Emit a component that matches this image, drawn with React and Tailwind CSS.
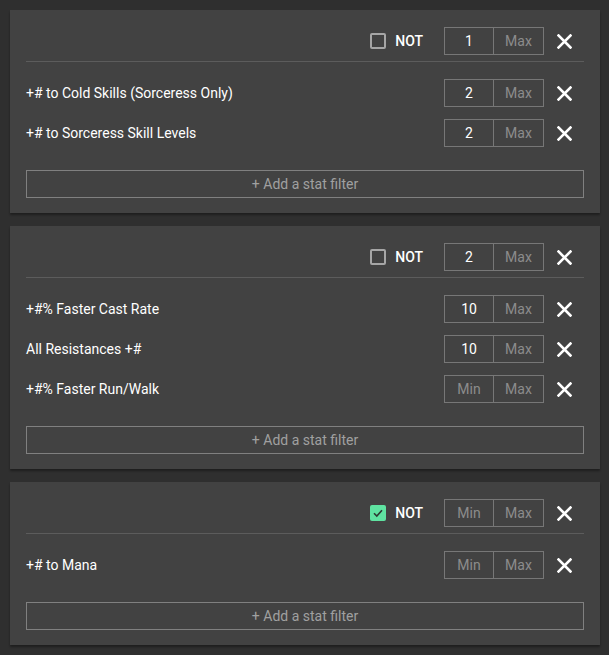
import React from "react";

const XIcon = () => (
  <svg width="15" height="15" viewBox="0 0 15 15" className="block">
    <path d="M1.5 1.5 L13.5 13.5 M13.5 1.5 L1.5 13.5" stroke="#ffffff" strokeWidth="2.6" strokeLinecap="square" fill="none" />
  </svg>
);

const RangeInputs = ({ min, max }) => (
  <div className="flex items-center">
    <div className="flex h-[28px] w-[100px] border border-[#777777]">
      <div className={"flex w-1/2 items-center justify-center border-r border-[#777777] " + (min ? "text-white" : "text-[#8c8c8c]")}>
        {min || "Min"}
      </div>
      <div className={"flex w-1/2 items-center justify-center " + (max ? "text-white" : "text-[#8c8c8c]")}>
        {max || "Max"}
      </div>
    </div>
    <div className="flex w-[40px] items-center justify-center">
      <XIcon />
    </div>
  </div>
);

const Checkbox = ({ checked }) =>
  checked ? (
    <div className="flex h-[16px] w-[16px] items-center justify-center rounded-[2px] bg-[#5fe3a1]">
      <svg width="12" height="12" viewBox="0 0 12 12">
        <path d="M2 6.2 L4.8 9 L10 3.2" stroke="#2d3a33" strokeWidth="1.6" fill="none" />
      </svg>
    </div>
  ) : (
    <div className="h-[16px] w-[16px] rounded-[2px] border-2 border-[#a6a6a6]" />
  );

const Panel = ({ checked, count, rows }) => (
  <div className="bg-[#424242] px-4 pt-[17px] pb-[15px] shadow-[0_2px_2px_rgba(0,0,0,0.35)]">
    <div className="flex h-[28px] items-center justify-end">
      <Checkbox checked={checked} />
      <span className="ml-[9px] mr-[21px] font-medium text-white">NOT</span>
      <RangeInputs min={count} />
    </div>
    <div className="mt-[6px] h-px bg-[#5c5c5c]" />
    <div className="mt-[17px] flex flex-col gap-[12px]">
      {rows.map((r) => (
        <div key={r.label} className="flex h-[28px] items-center justify-between">
          <span className="text-white">{r.label}</span>
          <RangeInputs min={r.min} />
        </div>
      ))}
    </div>
    <div className="mt-[23px] flex h-[28px] items-center justify-center border border-[#808080] text-[#a0a0a0]">
      + Add a stat filter
    </div>
  </div>
);

export default function App() {
  return (
    <div
      className="min-h-screen bg-[#2f2f2f] pt-[10px] pl-[10px] text-[14px]"
      style={{ fontFamily: "Roboto, 'Liberation Sans', sans-serif" }}
    >
      <div className="flex w-[590px] flex-col gap-[13px]">
        <Panel
          count="1"
          rows={[
            { label: "+# to Cold Skills (Sorceress Only)", min: "2" },
            { label: "+# to Sorceress Skill Levels", min: "2" },
          ]}
        />
        <Panel
          count="2"
          rows={[
            { label: "+#% Faster Cast Rate", min: "10" },
            { label: "All Resistances +#", min: "10" },
            { label: "+#% Faster Run/Walk" },
          ]}
        />
        <Panel checked rows={[{ label: "+# to Mana" }]} />
      </div>
    </div>
  );
}
